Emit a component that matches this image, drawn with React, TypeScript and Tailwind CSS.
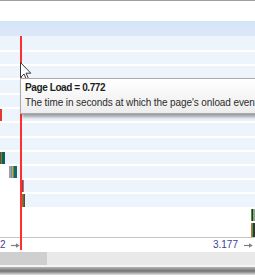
import React from "react";

type Seg = [string, number];
type Row = { h: number; white?: boolean; bar?: { start: number; segs: Seg[] } };

const rows: Row[] = [
  { h: 14 },
  { h: 12 },
  { h: 12 },
  { h: 13 },
  { h: 12 },
  { h: 12, bar: { start: 0, segs: [["#e23a2a", 2]] } },
  { h: 13 },
  { h: 12 },
  { h: 12, bar: { start: 0, segs: [["#8a3b2b", 1], ["#3f9a3f", 1], ["#0f5f5a", 3]] } },
  {
    h: 12,
    bar: {
      start: 9,
      segs: [["#c48ea8", 2], ["#35a7a7", 1], ["#d9a24a", 1], ["#4aa04a", 1], ["#17666a", 3]],
    },
  },
  { h: 12, bar: { start: 21, segs: [["#e22020", 2], ["#6f8f9b", 1]] } },
  { h: 13, bar: { start: 22, segs: [["#3d9c3d", 1], ["#c83a2a", 1], ["#4a4a4a", 1]] } },
  { h: 12, white: true, bar: { start: 251, segs: [["#3d9c3d", 1], ["#2b2b2b", 1], ["#8aa88a", 2]] } },
  { h: 14, white: true, bar: { start: 251, segs: [["#c8702a", 1], ["#3d9c3d", 1], ["#333333", 2]] } },
];

function Arrow() {
  return (
    <svg width="9" height="5" viewBox="0 0 9 5" className="block">
      <path d="M0 2.5 H6" stroke="#808080" strokeWidth="1.2" />
      <path d="M5 0.3 L8.8 2.5 L5 4.7 Z" fill="#808080" />
    </svg>
  );
}

export default function App() {
  return (
    <div
      className="relative w-[255px] h-[280px] overflow-hidden bg-white flex flex-col"
      style={{ fontFamily: '"Liberation Sans", Arial, sans-serif' }}
    >
      <div className="h-[1px] bg-[#a0a0a0]" />
      <div className="h-[20px] bg-white" />
      <div className="h-[15px] bg-gradient-to-b from-[#d4e4f6] to-[#dce8f8]" />
      <div className="flex flex-col">
        {rows.map((r, i) => (
          <div
            key={i}
            className={`flex ${i === 0 ? "" : "mt-[2px]"}`}
            style={{ height: r.h }}
          >
            {r.bar && <div className="bg-white shrink-0" style={{ width: r.bar.start }} />}
            {r.bar &&
              r.bar.segs.map((s, j) => (
                <div key={j} className="shrink-0" style={{ width: s[1], background: s[0] }} />
              ))}
            <div className={`flex-1 ${r.white ? "bg-white" : "bg-[#eef4fc]"}`} />
          </div>
        ))}
      </div>
      <div className="h-[1px] bg-[#c4c4c4]" />
      <div className="h-[14px] flex items-center text-[10px] leading-[12px] text-[#3e3f96]">
        <span>2</span>
        <span className="ml-[5px]">
          <Arrow />
        </span>
        <div className="flex-1" />
        <span>3.177</span>
        <span className="ml-[6px] mr-[2px]">
          <Arrow />
        </span>
      </div>
      <div className="h-[13px] flex bg-[#e9e9e9]">
        <div className="w-[47px] bg-[#cfcfcf]" />
      </div>
      <div className="h-[2px] bg-[#f4f4f4]" />
      <div className="h-[8px] bg-gradient-to-b from-[#b8b8b8] via-[#737373] to-[#e4e4e4]" />
      <div className="flex-1 bg-white" />

      {/* red marker line */}
      <div className="absolute left-[20px] top-[36px] w-[2px] h-[214px] bg-[#ff2f2f]" />

      {/* cursor */}
      <svg
        className="absolute left-[20px] top-[62px]"
        width="12"
        height="19"
        viewBox="0 0 12 19"
      >
        <path
          d="M0.5 0.5 L0.5 15.5 L4 12 L6.5 17.5 L8.5 16.6 L6 11.2 L10.8 11.2 Z"
          fill="#ffffff"
          stroke="#3a3a3a"
          strokeWidth="1"
          strokeLinejoin="miter"
        />
      </svg>

      {/* tooltip */}
      <div className="absolute left-[20px] top-[78px] w-[250px] h-[36px] border border-[#a9a9a9] bg-gradient-to-b from-[#ffffff] to-[#ededed] shadow-[2px_3px_3px_rgba(0,0,0,0.35)] pl-[4px] pt-[3px] text-[10px] leading-[12px] whitespace-nowrap">
        <div className="font-bold text-[#1e1e1e] tracking-[-0.4px]">Page Load = 0.772</div>
        <div className="mt-[3px] text-[#2a2a2a] tracking-[-0.1px]">The time in seconds at which the page's onload event</div>
      </div>
    </div>
  );
}
